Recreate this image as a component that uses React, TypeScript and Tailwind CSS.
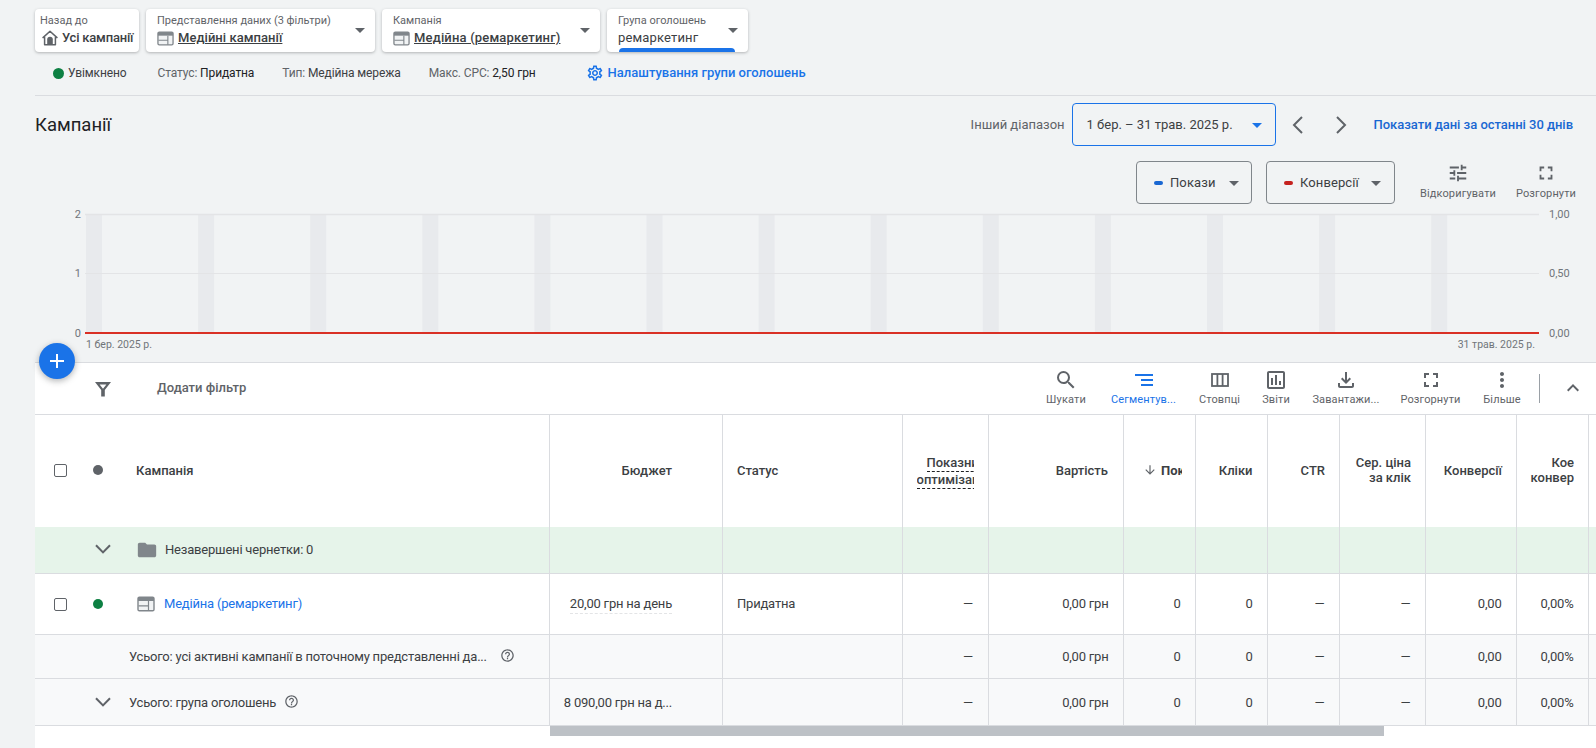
import React from "react";
import {
  MdArrowDropDown, MdOutlineSettings, MdTune, MdFullscreen,
  MdSearch, MdSegment, MdOutlineAssessment, MdOutlineFileDownload, MdMoreVert,
  MdKeyboardArrowUp, MdFolder, MdHelpOutline, MdArrowDownward,
} from "react-icons/md";

function CampaignIcon({ size = 18 }: { size?: number }) {
  return (
    <svg width={size} height={size} viewBox="0 0 18 18" className="shrink-0">
      <rect x="1" y="2.2" width="16" height="13.6" rx="1.4" fill="#f1f3f4" stroke="#80868b" strokeWidth="1.4" />
      <rect x="1" y="2.2" width="16" height="3.8" fill="#80868b" />
      <path d="M1.5 10.8H11.5M11.5 6v9.5" stroke="#80868b" strokeWidth="1.2" />
    </svg>
  );
}

function HomeIcon() {
  return (
    <svg width="18" height="18" viewBox="0 0 18 18" className="shrink-0">
      <path d="M9 2.2 2 8.6h1.6v7.2h10.8V8.6H16z" fill="none" stroke="#5f6368" strokeWidth="1.5" strokeLinejoin="round" />
      <path d="M6.2 15.8V10.6a2.8 2.8 0 0 1 5.6 0v5.2z" fill="#5f6368" />
    </svg>
  );
}

function Chevron({ className }: { className: string }) {
  return (
    <svg width="16" height="10" viewBox="0 0 16 10" className={`shrink-0 ${className}`}>
      <path d="M1 1.2 8 8.4l7-7.2" fill="none" stroke="#5f6368" strokeWidth="2" />
    </svg>
  );
}

function Pager({ left, className }: { left?: boolean; className: string }) {
  return (
    <svg width="30" height="30" viewBox="0 0 30 30" className={className}>
      <path d={left ? "M19 7 11 15l8 8" : "M11 7l8 8-8 8"} fill="none" stroke="#5f6368" strokeWidth="2" />
    </svg>
  );
}

function Card({ w, label, icon, value, underline, bar, valueClass = "" }: { w: string; label: string; icon?: React.ReactNode; value: string; underline?: boolean; bar?: boolean; valueClass?: string }) {
  return (
    <div className={`relative h-[43px] ${w} rounded bg-white shadow-[0_1px_3px_rgba(60,64,67,0.35)] overflow-hidden`}>
      <div className="pt-[5px] text-[11px] leading-[14px] text-[#5f6368] whitespace-nowrap">{label}</div>
      <div className={`mt-[1px] flex items-center gap-[4px] text-[13px] leading-[18px] text-[#3c4043] whitespace-nowrap ${valueClass}`}>
        {icon}
        <span className={underline ? "underline" : ""}>{value}</span>
      </div>
      <MdArrowDropDown size={24} className="absolute right-[3px] top-[9px] text-[#5f6368]" />
      {bar && <div className="absolute bottom-0 left-[12px] h-[4px] w-[116px] rounded-t bg-[#1a73e8]" />}
    </div>
  );
}

function Tool({ icon, label, w, blue, gap }: { icon: React.ReactNode; label: string; w: string; blue?: boolean; gap: string }) {
  return (
    <div className={`flex flex-col items-center shrink-0 ${w} ${blue ? "text-[#1a73e8]" : "text-[#5f6368]"}`}>
      <div className="flex h-[24px] items-center justify-center">{icon}</div>
      <div className={`${gap} text-[11px] leading-[14px] font-[450] tracking-[0.12px] whitespace-nowrap`}>{label}</div>
    </div>
  );
}

const cols = "grid grid-cols-[515px_173px_179.5px_86px_135.5px_72px_72px_72px_86px_91px_72px_1fr]";
const cell = "border-r border-[#dadce0] flex items-center";
const num = `${cell} justify-end pr-[14.5px]`;

function Metrics({ pad = "" }: { pad?: string }) {
  const values = ["—", "0,00 грн", "0", "0", "—", "—", "0,00", "0,00%"];
  return (
    <>
      {values.map((v, i) => (
        <div key={i} className={`${num} ${pad}`}>{v}</div>
      ))}
      <div />
    </>
  );
}

const bars = Array.from({ length: 13 }, (_, i) => 51 + i * 112.1);

function Chart() {
  return (
    <svg width="1561" height="158" className="block" style={{ fontFamily: "Roboto, sans-serif" }}>
      {bars.map((x) => (
        <rect key={x} x={x} y="10" width="16" height="119" fill="#e8eaed" />
      ))}
      <path d="M50 69.5H1504" stroke="#e3e4e6" strokeWidth="1" />
      <path d="M50 10.5H1504" stroke="#e3e4e6" strokeWidth="1.5" />
      <rect x="50" y="128" width="1454" height="2" fill="#d93025" />
      <g fontSize="11" fill="#70757a">
        <text x="46" y="14" textAnchor="end">2</text>
        <text x="46" y="73" textAnchor="end">1</text>
        <text x="46" y="133" textAnchor="end">0</text>
        <text x="1514" y="14">1,00</text>
        <text x="1514" y="73">0,50</text>
        <text x="1514" y="133">0,00</text>
        <text x="51" y="144" fontSize="10.5">1 бер. 2025 р.</text>
        <text x="1500" y="144" fontSize="10.5" textAnchor="end">31 трав. 2025 р.</text>
      </g>
    </svg>
  );
}

function Back() {
  return (
    <div className="relative h-[43px] w-[104px] rounded bg-white pl-[5px] shadow-[0_1px_3px_rgba(60,64,67,0.35)]">
      <div className="pt-[5px] text-[11px] leading-[14px] text-[#5f6368]">Назад до</div>
      <div className="mt-[1px] flex items-center gap-[3px] pl-[1px] text-[13px] leading-[18px] font-[460] tracking-[-0.2px] whitespace-nowrap text-[#3c4043]">
        <HomeIcon />
        <span>Усі кампанії</span>
      </div>
    </div>
  );
}

export default function App() {
  return (
    <div className="relative h-[748px] w-[1596px] overflow-hidden bg-[#f1f3f4] pl-[35px] font-['Roboto',sans-serif] text-[#3c4043]">
      {/* Breadcrumb cards */}
      <div className="flex gap-[7px] pt-[9px]">
        <Back />
        <Card w="w-[229px] pl-[11px]" label="Представлення даних (3 фільтри)" icon={<CampaignIcon size={17} />} value="Медійні кампанії" underline valueClass="font-[460] tracking-[0.05px]" />
        <Card w="w-[218px] pl-[11px]" label="Кампанія" icon={<CampaignIcon size={17} />} value="Медійна (ремаркетинг)" underline valueClass="font-[460] tracking-[0.17px]" />
        <Card w="w-[141px] pl-[11px]" label="Група оголошень" value="ремаркетинг" bar valueClass="font-[450] tracking-[0.15px]" />
      </div>

      {/* Status row */}
      <div className="flex h-[44px] items-center border-b border-[#dadce0] pb-[1px] pl-[18px] text-[12px] tracking-[-0.12px] whitespace-nowrap">
        <span className="h-[11px] w-[11px] rounded-full bg-[#0d8043]" />
        <span className="ml-[4px] text-[#3c4043]">Увімкнено</span>
        <span className="ml-[31px] text-[#5f6368]">Статус: <span className="text-[#202124]">Придатна</span></span>
        <span className="ml-[28px] text-[#5f6368]">Тип: <span className="text-[#3c4043]">Медійна мережа</span></span>
        <span className="ml-[28px] text-[#5f6368]">Макс. CPC: <span className="text-[#202124]">2,50 грн</span></span>
        <MdOutlineSettings size={18} className="ml-[50px] text-[#1a73e8]" />
        <span className="ml-[4px] text-[13px] font-[460] tracking-normal text-[#1a73e8]">Налаштування групи оголошень</span>
      </div>

      {/* Title row */}
      <div className="flex h-[65px] items-start">
        <h1 className="mt-[17px] text-[18.5px] leading-[24px] font-normal text-[#202124]">Кампанії</h1>
        <div className="ml-auto mt-[7px] flex items-center whitespace-nowrap">
          <span className="text-[13px] text-[#5f6368]">Інший діапазон</span>
          <div className="relative ml-[7px] flex h-[43px] w-[204px] items-center rounded border border-[#1a73e8] pl-[14px] text-[13px] text-[#3c4043]">
            1 бер. – 31 трав. 2025 р.
            <MdArrowDropDown size={24} className="absolute right-[6px] top-[9px] text-[#1a73e8]" />
          </div>
          <Pager left className="ml-[7px]" />
          <Pager className="ml-[13px]" />
          <span className="ml-[18px] mr-[23px] text-[13px] font-[460] tracking-[-0.03px] text-[#1967d2]">Показати дані за останні 30 днів</span>
        </div>
      </div>

      {/* Metric row */}
      <div className="flex h-[43px] items-start justify-end">
        <div className="flex h-[43px] w-[116px] items-center rounded border border-[#80868b] pl-[17px] text-[13px] font-[450] tracking-[0.1px] text-[#3c4043]">
          <span className="mr-[7px] h-[4px] w-[9px] rounded-sm bg-[#1967d2]" />
          Покази
          <MdArrowDropDown size={24} className="ml-[6px] text-[#5f6368]" />
        </div>
        <div className="ml-[14px] flex h-[43px] w-[129px] items-center rounded border border-[#80868b] pl-[17px] text-[13px] font-[450] tracking-[0.1px] text-[#3c4043]">
          <span className="mr-[7px] h-[4px] w-[9px] rounded-sm bg-[#c5221f]" />
          Конверсії
          <MdArrowDropDown size={24} className="ml-[5px] text-[#5f6368]" />
        </div>
        <div className="ml-[25px] w-[76px]"><Tool w="w-[76px]" gap="mt-[2px]" icon={<MdTune size={22} />} label="Відкоригувати" /></div>
        <div className="ml-[20px] mr-[20px]"><Tool w="w-[60px]" gap="mt-[2px]" icon={<MdFullscreen size={22} />} label="Розгорнути" /></div>
      </div>

      <Chart />

      {/* Table panel */}
      <div className="h-[386px] bg-white">
        <div className="flex h-[53px] items-center border-y border-[#dadce0]">
          <svg width="24" height="24" viewBox="0 0 24 24" className="ml-[56px]">
            <path fillRule="evenodd" d="M4 5h16l-6.2 8v6.5h-3.6V13zM8.6 7.5h6.8L12 11.8z" fill="#5f6368" />
          </svg>
          <span className="ml-[42px] pb-[1px] text-[13px] font-[460] text-[#5f6368]">Додати фільтр</span>
          <div className="ml-auto flex items-start self-start pt-[5px]">
            <Tool w="w-[60px]" gap="mt-[1px]" icon={<MdSearch size={24} />} label="Шукати" />
            <Tool w="w-[95px]" gap="mt-[1px]" blue icon={<MdSegment size={24} />} label="Сегментув..." />
            <Tool w="w-[41px] ml-[8px]" gap="mt-[1px]" label="Стовпці" icon={
              <svg width="24" height="24" viewBox="0 0 24 24">
                <rect x="4" y="6" width="16" height="12" fill="none" stroke="#5f6368" strokeWidth="1.8" />
                <path d="M9.4 6v12M14.6 6v12" stroke="#5f6368" strokeWidth="1.8" />
              </svg>
            } />
            <Tool w="w-[30px] ml-[21px]" gap="mt-[1px]" icon={<MdOutlineAssessment size={24} />} label="Звіти" />
            <Tool w="w-[68px] ml-[21px]" gap="mt-[1px]" icon={<MdOutlineFileDownload size={24} />} label="Завантажи..." />
            <Tool w="w-[61px] ml-[20px]" gap="mt-[1px]" icon={<MdFullscreen size={24} />} label="Розгорнути" />
            <Tool w="w-[38px] ml-[22px]" gap="mt-[1px]" icon={<MdMoreVert size={24} />} label="Більше" />
            <div className="ml-[18px] mt-[6px] h-[29px] w-px bg-[#9aa0a6]" />
            <MdKeyboardArrowUp size={24} className="ml-[21px] mr-[11px] mt-[8px] text-[#5f6368]" />
          </div>
        </div>

        {/* Header */}
        <div className={`${cols} h-[112px] text-[13px] font-[460] leading-[15px] text-[#3c4043]`}>
          <div className={`${cell} pb-[2px]`}>
            <span className="ml-[19px] h-[13px] w-[13px] rounded-[2px] border border-[#5f6368]" />
            <span className="ml-[26px] h-[10px] w-[10px] rounded-full bg-[#5f6368]" />
            <span className="ml-[33px]">Кампанія</span>
          </div>
          <div className={`${cell} justify-end pb-[2px] pr-[50px]`}>Бюджет</div>
          <div className={`${cell} pb-[2px] pl-[14px]`}>Статус</div>
          <div className={`${cell} justify-end pr-[14px]`}>
            <div className="mt-[2px] w-[57px] overflow-hidden whitespace-nowrap leading-[16px]">
              <div className="flex pl-[10px]"><span className="border-b border-dashed border-[#202124]">Показники</span></div>
              <div className="flex"><span className="border-b border-dashed border-[#202124]">оптимізації</span></div>
            </div>
          </div>
          <div className={`${cell} justify-end pb-[2px] pr-[15px]`}>Вартість</div>
          <div className={`${cell} pb-[2px] pl-[19px]`}>
            <MdArrowDownward size={14} className="text-[#5f6368]" />
            <div className="ml-[4px] w-[21px] overflow-hidden whitespace-nowrap font-bold">Покази</div>
          </div>
          <div className={`${cell} justify-end pb-[2px] pr-[14.5px]`}>Кліки</div>
          <div className={`${cell} justify-end pb-[2px] pr-[14px]`}>CTR</div>
          <div className={`${cell} justify-end pb-[2px] pr-[14px] text-right`}>Сер. ціна<br />за клік</div>
          <div className={`${cell} justify-end pb-[2px] pr-[14px]`}>Конверсії</div>
          <div className={`${cell} justify-end pb-[2px] pr-[14px]`}>
            <div className="w-[44px] overflow-hidden whitespace-nowrap text-right">Кое<br />конвер</div>
          </div>
          <div />
        </div>

        {/* Drafts row */}
        <div className={`${cols} h-[47px] border-b border-[#dadce0] bg-[#e6f4ea] text-[13px] tracking-[-0.2px]`}>
          <div className={cell}>
            <Chevron className="ml-[60px] -mt-[3px]" />
            <MdFolder size={22} className="ml-[25px] text-[#80868b]" />
            <span className="ml-[7px] text-[#3c4043]">Незавершені чернетки: 0</span>
          </div>
          {Array.from({ length: 10 }, (_, i) => <div key={i} className={cell} />)}
          <div />
        </div>

        {/* Campaign row */}
        <div className={`${cols} h-[61px] border-b border-[#dadce0] text-[13px] tracking-[-0.2px]`}>
          <div className={cell}>
            <span className="ml-[19px] h-[13px] w-[13px] rounded-[2px] border border-[#5f6368]" />
            <span className="ml-[26px] h-[10px] w-[10px] rounded-full bg-[#0d8043]" />
            <span className="ml-[34px]"><CampaignIcon /></span>
            <span className="ml-[9px] text-[#1a73e8]">Медійна (ремаркетинг)</span>
          </div>
          <div className={`${cell} justify-end pr-[50px]`}><span className="border-b border-dashed border-[#e3e4e6]">20,00 грн на день</span></div>
          <div className={`${cell} pl-[14px]`}>Придатна</div>
          <Metrics />
        </div>

        {/* Totals 1 */}
        <div className={`${cols} h-[44px] border-b border-[#dadce0] bg-[#f8f9fa] text-[13px] tracking-[-0.2px]`}>
          <div className={`${cell} pt-[1px]`}>
            <span className="ml-[94px] w-[356px] whitespace-nowrap">Усього: усі активні кампанії в поточному представленні да...</span>
            <MdHelpOutline size={15} className="ml-[15px] -mt-[3px] text-[#5f6368]" />
          </div>
          <div className={cell} />
          <div className={cell} />
          <Metrics pad="pt-[1px]" />
        </div>

        {/* Totals 2 */}
        <div className={`${cols} h-[47px] border-b border-[#dadce0] bg-[#f8f9fa] text-[13px] tracking-[-0.2px]`}>
          <div className={`${cell} pt-[2px]`}>
            <Chevron className="ml-[60px] -mt-[3px]" />
            <span className="ml-[18px]">Усього: група оголошень</span>
            <MdHelpOutline size={15} className="ml-[8px] -mt-[3px] text-[#5f6368]" />
          </div>
          <div className={`${cell} justify-end pt-[2px] pr-[50px]`}>8 090,00 грн на д...</div>
          <div className={cell} />
          <Metrics pad="pt-[2px]" />
        </div>

        {/* Horizontal scrollbar */}
        <div className="ml-[515px] h-[10px] w-[834px] bg-[#bdc1c6]" />
      </div>

      {/* Floating add button */}
      <div className="absolute left-[39px] top-[343px] flex h-[36px] w-[36px] items-center justify-center rounded-full bg-[#1a73e8] shadow-[0_2px_6px_rgba(60,64,67,0.4)]">
        <svg width="18" height="18" viewBox="0 0 18 18"><path d="M9 2v14M2 9h14" stroke="#fff" strokeWidth="2" /></svg>
      </div>
    </div>
  );
}
